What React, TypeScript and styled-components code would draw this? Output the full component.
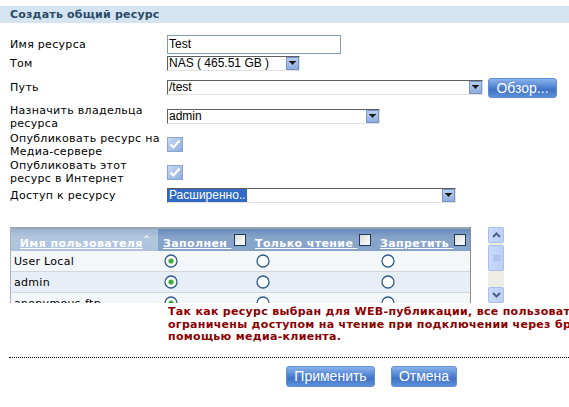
import styled, { createGlobalStyle } from "styled-components";

const GlobalStyle = createGlobalStyle`
  body {
    margin: 0;
    background: #fff;
    overflow: hidden;
    font-family: "DejaVu Sans", Verdana, sans-serif;
    font-size: 11px;
    color: #000;
  }
`

const Page = styled.div`
  width: 569px;
  height: 407px;
  padding-top: 6px;
  box-sizing: border-box;
  overflow: hidden;
`

const TitleBar = styled.div`
  height: 17px;
  background-color: #d4e4f0;
  display: flex;
  align-items: center;
  padding-left: 10px;
`

const Title = styled.h1`
  margin: 0;
  font-size: 11px;
  font-weight: bold;
  color: #2d4a68;
  letter-spacing: 0.2px;
`

const Form = styled.div`
  margin-top: 12px;
  padding-left: 10px;
  display: flex;
  flex-direction: column;
`

const Row = styled.div<{ $h: number }>`
  height: ${(p) => p.$h}px;
  display: grid;
  grid-template-columns: 157px 1fr;
  align-items: center;
`

const Label = styled.div`
  line-height: 13px;
  letter-spacing: 0.3px;
`

const Controls = styled.div`
  display: flex;
  align-items: center;
  gap: 5px;
`

const TextInput = styled.div`
  width: 174px;
  height: 19px;
  box-sizing: border-box;
  border: 1px solid #7f9db9;
  font-family: "Liberation Sans", Arial, sans-serif;
  font-size: 12px;
  line-height: 17px;
  padding-left: 1px;
`

const SelectBox = styled.div<{ $w: number }>`
  width: ${(p) => p.$w}px;
  height: 15px;
  box-sizing: border-box;
  border-top: 1px solid #5f5f5f;
  border-left: 1px solid #5f5f5f;
  border-bottom: 1px solid #e2e2e2;
  border-right: 1px solid #e2e2e2;
  display: flex;
  align-items: center;
  justify-content: space-between;
  background: #fff;
`

const SelectText = styled.span<{ $selected?: boolean }>`
  font-family: "Liberation Sans", Arial, sans-serif;
  font-size: 12px;
  line-height: 13px;
  padding: 0 1px;
  white-space: nowrap;
  background: ${(p) => (p.$selected ? "#316ac5" : "transparent")};
  color: ${(p) => (p.$selected ? "#fff" : "#000")};
`

const ArrowButton = styled.span`
  width: 13px;
  height: 13px;
  box-sizing: border-box;
  border: 1px solid #7593c6;
  background: linear-gradient(#b9cdef, #8eaee0);
  display: flex;
  align-items: center;
  justify-content: center;
`

const BlueButton = styled.button<{ $w: number; $h: number }>`
  width: ${(p) => p.$w}px;
  height: ${(p) => p.$h}px;
  box-sizing: border-box;
  border: 1px solid #5f8fd6;
  border-radius: 3px;
  background: linear-gradient(#8ab2ea 0%, #5d8fd9 35%, #3f73c4 60%, #5f90d8 100%);
  color: #fff;
  font-family: "Liberation Sans", Tahoma, sans-serif;
  font-size: 14px;
  padding: 0;
  cursor: pointer;
`

const TableArea = styled.div`
  margin-top: 22px;
  padding-left: 10px;
  display: flex;
  gap: 17px;
`

const TableBox = styled.div`
  width: 461px;
  height: 76px;
  box-sizing: border-box;
  border-left: 1px solid #a9b1ba;
  border-right: 1px solid #8c8c8c;
  overflow: hidden;
`

const Grid = styled.div`
  display: grid;
  grid-template-columns: 147px 92px 125px 95px;
`

const HeadCell = styled.div<{ $first?: boolean }>`
  height: 24px;
  box-sizing: border-box;
  border-top: 2px solid #9aa6b4;
  background: ${(p) =>
    p.$first
      ? "linear-gradient(#9cb3d1, #b3c6de 40%, #adc2dc)"
      : "linear-gradient(#6a8cba, #87a4ca 40%, #86a3c9)"};
  display: flex;
  align-items: center;
  justify-content: ${(p) => (p.$first ? "center" : "space-between")};
  padding: 0 4px 0 5px;
`

const HeadText = styled.span`
  color: #fff;
  font-weight: bold;
  text-decoration: underline;
  white-space: pre;
  letter-spacing: 0.4px;
  margin-top: 6px;
`

const Caret = styled.sup`
  color: #fff;
  font-size: 9px;
  margin-top: -2px;
`

const HeadCheck = styled.span`
  width: 12px;
  height: 12px;
  box-sizing: border-box;
  border: 1px solid #1d3b5c;
  background: linear-gradient(135deg, #dcdcd6, #fff);
`

const Cell = styled.div<{ $alt?: boolean }>`
  height: 21px;
  box-sizing: border-box;
  border-bottom: 1px solid #d2d6da;
  background: ${(p) => (p.$alt ? "#e8eef5" : "#f4f7fa")};
  display: flex;
  align-items: center;
  padding-left: 3px;
  white-space: nowrap;
  letter-spacing: 0.3px;
`

const RadioCell = styled(Cell)`
  padding-left: 6px;
`

const ScrollBar = styled.div`
  width: 16px;
  height: 76px;
  background: #eeede6;
  display: flex;
  flex-direction: column;
  justify-content: space-between;
`

const ScrollTop = styled.div`
  display: flex;
  flex-direction: column;
  gap: 2px;
`

const ScrollButton = styled.div<{ $h: number }>`
  height: ${(p) => p.$h}px;
  box-sizing: border-box;
  border: 1px solid #a8bff0;
  border-radius: 2px;
  background: linear-gradient(90deg, #cbdafc, #bccff9);
  display: flex;
  align-items: center;
  justify-content: center;
`

const NoticeClip = styled.div`
  margin-top: 3px;
  margin-left: 168px;
  width: 401px;
  overflow: hidden;
`

const Notice = styled.div`
  color: #8b0000;
  font-weight: bold;
  line-height: 12.5px;
  letter-spacing: 0.3px;
  white-space: nowrap;
`

const Divider = styled.hr`
  margin: 13px 0 0 9px;
  border: none;
  border-top: 1px dotted #000;
`

const Actions = styled.div`
  margin-top: 8px;
  padding-left: 286px;
  display: flex;
  gap: 16px;
`

const Arrow = () => (
  <ArrowButton>
    <svg width="7" height="5" viewBox="0 0 7 5">
      <path d="M0 0h7L3.5 4z" fill="#1a1a1a" />
      <rect x="0" y="0" width="7" height="1" fill="#1a1a1a" />
    </svg>
  </ArrowButton>
)

const Select = ({ w, value, selected }: { w: number; value: string; selected?: boolean }) => (
  <SelectBox $w={w}>
    <SelectText $selected={selected}>{value}</SelectText>
    <Arrow />
  </SelectBox>
)

const CheckedBox = () => (
  <svg width="16" height="15" viewBox="0 0 16 15">
    <defs>
      <linearGradient id="cb" x1="0" y1="0" x2="1" y2="1">
        <stop offset="0" stopColor="#c9d9f2" />
        <stop offset="1" stopColor="#8eaddf" />
      </linearGradient>
    </defs>
    <rect x="0.5" y="0.5" width="15" height="14" fill="url(#cb)" stroke="#8aa5d2" />
    <path d="M3.5 7.5l3 3 6-7" fill="none" stroke="#fff" strokeWidth="2.2" />
  </svg>
)

const Radio = ({ on }: { on?: boolean }) => (
  <svg width="14" height="14" viewBox="0 0 14 14">
    <circle cx="7" cy="7" r="6" fill="#fff" stroke="#2f5b8c" strokeWidth="1.3" />
    {on && <circle cx="7" cy="7" r="2.6" fill="#3cab3c" />}
  </svg>
)

const Chevron = ({ up }: { up?: boolean }) => (
  <svg width="9" height="6" viewBox="0 0 9 6">
    <path
      d={up ? "M1 5l3.5-3.5L8 5" : "M1 1l3.5 3.5L8 1"}
      fill="none"
      stroke="#4d6185"
      strokeWidth="2"
    />
  </svg>
)

const Grip = () => (
  <svg width="7" height="7" viewBox="0 0 7 7">
    <path d="M0 1h7M0 3h7M0 5h7" stroke="#9fb3dc" strokeWidth="1" />
  </svg>
)

const users = [
  { name: "User Local", alt: false },
  { name: "admin", alt: true },
  { name: "anonymous-ftp", alt: false },
]

const App = () => {
  return (
    <Page>
      <GlobalStyle />
      <TitleBar>
        <Title>Создать общий ресурс</Title>
      </TitleBar>
      <Form>
        <Row $h={19}>
          <Label>Имя ресурса</Label>
          <TextInput>Test</TextInput>
        </Row>
        <Row $h={18}>
          <Label>Том</Label>
          <Select w={133} value="NAS ( 465.51 GB )" />
        </Row>
        <Row $h={31}>
          <Label>Путь</Label>
          <Controls>
            <Select w={316} value="/test" />
            <BlueButton $w={69} $h={20}>Обзор...</BlueButton>
          </Controls>
        </Row>
        <Row $h={27}>
          <Label>
            Назначить владельца
            <br />
            ресурса
          </Label>
          <Controls>
            <Select w={213} value="admin" />
          </Controls>
        </Row>
        <Row $h={29}>
          <Label>
            Опубликовать ресурс на
            <br />
            Медиа-сервере
          </Label>
          <Controls>
            <CheckedBox />
          </Controls>
        </Row>
        <Row $h={26}>
          <Label>
            Опубликовать этот
            <br />
            ресурс в Интернет
          </Label>
          <Controls>
            <CheckedBox />
          </Controls>
        </Row>
        <Row $h={20}>
          <Label>Доступ к ресурсу</Label>
          <Select w={289} value="Расширенно.." selected />
        </Row>
      </Form>

      <TableArea>
        <TableBox>
          <Grid>
            <HeadCell $first>
              <HeadText>Имя пользователя</HeadText>
              <Caret>^</Caret>
            </HeadCell>
            <HeadCell>
              <HeadText>Заполнен </HeadText>
              <HeadCheck />
            </HeadCell>
            <HeadCell>
              <HeadText>Только чтение </HeadText>
              <HeadCheck />
            </HeadCell>
            <HeadCell>
              <HeadText>Запретить </HeadText>
              <HeadCheck />
            </HeadCell>
            {users.map((u) => (
              <>
                <Cell key={u.name} $alt={u.alt}>{u.name}</Cell>
                <RadioCell $alt={u.alt}><Radio on /></RadioCell>
                <RadioCell $alt={u.alt}><Radio /></RadioCell>
                <RadioCell $alt={u.alt}><Radio /></RadioCell>
              </>
            ))}
          </Grid>
        </TableBox>
        <ScrollBar>
          <ScrollTop>
            <ScrollButton $h={16}><Chevron up /></ScrollButton>
            <ScrollButton $h={26}><Grip /></ScrollButton>
          </ScrollTop>
          <ScrollButton $h={16}><Chevron /></ScrollButton>
        </ScrollBar>
      </TableArea>

      <NoticeClip>
        <Notice>
          Так как ресурс выбран для WEB-публикации, все пользователи будут
          <br />
          ограничены доступом на чтение при подключении через браузер или с
          <br />
          помощью медиа-клиента.
        </Notice>
      </NoticeClip>
      <Divider />
      <Actions>
        <BlueButton $w={89} $h={21}>Применить</BlueButton>
        <BlueButton $w={66} $h={21}>Отмена</BlueButton>
      </Actions>
    </Page>
  )
}

export default App
